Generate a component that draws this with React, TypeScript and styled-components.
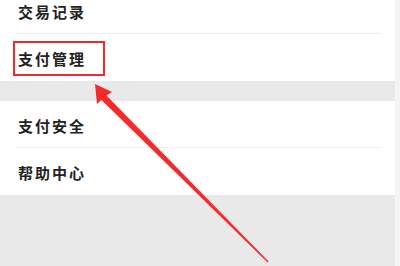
import styled, { createGlobalStyle } from 'styled-components';

const GlobalStyle = createGlobalStyle`
    html, body {
        margin: 0;
        padding: 0;
        background: #e9e9e9;
    }
`

const Page = styled.div`
    position: relative;
    height: 100vh;
    overflow: hidden;
    background: #e9e9e9;
    border-right: 5px solid #f4f4f4;
    font-family: 'Noto Sans CJK SC', 'Noto Sans', sans-serif;
`

const List = styled.div <{ first?: boolean }>`
    display: flex;
    flex-direction: column;
    background: #fff;
    margin-top: ${(props) => (props.first ? '-13px' : '0')};
    margin-bottom: ${(props) => (props.first ? '20px' : '0')};
`

const Row = styled.div <{ divider?: boolean }>`
    height: 46px;
    display: flex;
    align-items: center;
    margin-left: 16px;
    margin-right: 14px;
    padding-left: 2px;
    padding-top: 2px;
    box-sizing: border-box;
    height: 47px;
    border-bottom: ${(props) => (props.divider ? '1px solid #eeeeee' : '1px solid transparent')};
    font-size: 15px;
    font-weight: 700;
    letter-spacing: 2px;
    color: #222;
`

const Highlight = styled.div`
    position: absolute;
    left: 13px;
    top: 41px;
    width: 88px;
    height: 31px;
    border: 2px solid #ee2a2e;
`

const Arrow = styled.svg`
    position: absolute;
    left: 0;
    top: 0;
    width: 400px;
    height: 266px;
    pointer-events: none;
`

const items = [
    ['交易记录', '支付管理'],
    ['支付安全', '帮助中心'],
]

export default function App() {
    return (
        <>
            <GlobalStyle />
            <Page>
                {items.map((group, gi) => (
                    <List key={gi} first={gi == 0}>
                        {group.map((label, i) => (
                            <Row key={label} divider={i < group.length - 1}>{label}</Row>
                        ))}
                    </List>
                ))}
                <Highlight />
                <Arrow viewBox="0 0 400 266">
                    <polygon
                        points="95,84 112,92 106.5,95.5 268.6,261.6 267.6,262.4 101.5,100 97,104"
                        fill="#f52a2a"
                    />
                </Arrow>
            </Page>
        </>
    )
}
